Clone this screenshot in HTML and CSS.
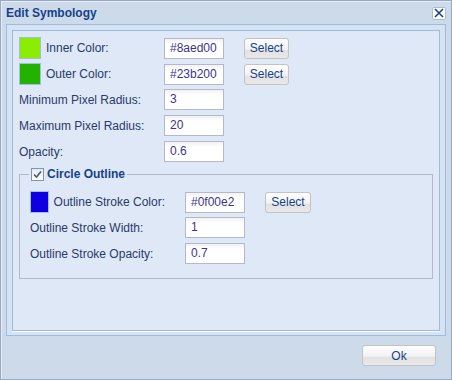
FILE: index.html
```html
<!DOCTYPE html>
<html lang="en">
  <head>
    <meta charset="UTF-8" />
    <title>Edit Symbology</title>
    <link rel="stylesheet" href="styles.css">
  </head>
  <body>
    <div class="win">
      <div class="win-head">
        <span class="win-title">Edit Symbology</span>
        <span class="win-close">
          <svg width="10" height="10" viewBox="0 0 10 10"><path d="M1 1L9 9M9 1L1 9" stroke="#15428b" stroke-width="1.6" /></svg>
        </span>
      </div>
      <div class="frame">
        <div class="panel">
          <div class="row">
            <div class="lbl"><span class="swatch" style="background:#8aed00"></span>Inner Color:</div>
            <div class="field">#8aed00</div>
            <button class="btn">Select</button>
          </div>
          <div class="row">
            <div class="lbl"><span class="swatch" style="background:#23b200"></span>Outer Color:</div>
            <div class="field">#23b200</div>
            <button class="btn">Select</button>
          </div>
          <div class="row">
            <div class="lbl">Minimum Pixel Radius:</div>
            <div class="field">3</div>
          </div>
          <div class="row">
            <div class="lbl">Maximum Pixel Radius:</div>
            <div class="field">20</div>
          </div>
          <div class="row">
            <div class="lbl">Opacity:</div>
            <div class="field">0.6</div>
          </div>
          <fieldset class="group">
            <legend>
              <span class="check">
                <svg width="9" height="9" viewBox="0 0 9 9"><path d="M1 4.5L3.5 7L8 1.5" fill="none" stroke="#4a5a70" stroke-width="1.6" /></svg>
              </span>
              Circle Outline
            </legend>
            <div class="row wide">
              <div class="lbl"><span class="swatch" style="background:#0f00e2"></span>Outline Stroke Color:</div>
              <div class="field">#0f00e2</div>
              <button class="btn">Select</button>
            </div>
            <div class="row wide">
              <div class="lbl">Outline Stroke Width:</div>
              <div class="field">1</div>
            </div>
            <div class="row wide">
              <div class="lbl">Outline Stroke Opacity:</div>
              <div class="field">0.7</div>
            </div>
          </fieldset>
        </div>
      </div>
      <div class="win-foot">
        <button class="btn ok">Ok</button>
      </div>
    </div>
  </body>
</html>
```

FILE: styles.css
```css
body {
  margin: 0;
  font-family: "Liberation Sans", Arial, sans-serif;
  font-size: 12px;
}
.win {
  box-sizing: border-box;
  width: 452px;
  height: 380px;
  border: 1px solid #99a9c4;
  background: #cddae9;
  box-shadow: inset 1px 1px 0 #e4ecf6;
}
.win-head {
  height: 23px;
  display: flex;
  align-items: center;
  justify-content: space-between;
  padding: 0 5px 0 5px;
}
.win-title {
  font-weight: bold;
  color: #15428b;
  font-size: 12px;
  margin-top: 1px;
}
.win-close {
  box-sizing: border-box;
  width: 14px;
  height: 13px;
  margin-top: 1px;
  border: 1px solid #a9bcd6;
  border-radius: 2px;
  background: #fff;
  display: flex;
  align-items: center;
  justify-content: center;
}
.frame {
  margin: 0 5px;
  border: 1px solid #99bbe8;
  background: #d8e3f2;
  padding: 5px 5px 4px 5px;
}
.panel {
  box-sizing: border-box;
  height: 301px;
  border: 1px solid #99bbe8;
  background: #dfe8f6;
  box-shadow: 0 1px 0 #fff;
  padding: 6px 0 0 6px;
}
.row {
  display: grid;
  grid-template-columns: 125px 60px 45px;
  column-gap: 20px;
  align-items: center;
  height: 21px;
  margin-bottom: 5px;
  color: #2a3a6a;
}
.row.wide {
  grid-template-columns: 135px 60px 46px;
}
.lbl {
  display: flex;
  align-items: center;
  white-space: nowrap;
}
.swatch {
  box-sizing: border-box;
  width: 22px;
  height: 22px;
  border: 1px solid #9fbde6;
  margin-right: 5px;
}
.field {
  box-sizing: border-box;
  height: 21px;
  line-height: 19px;
  border: 1px solid #b5b8c8;
  background: linear-gradient(#f1f1f1, #fff 5px);
  padding-left: 5px;
  color: #3b348e;
  font-size: 12px;
}
.btn {
  box-sizing: border-box;
  height: 21px;
  border: 1px solid #c3c3c3;
  border-radius: 3px;
  background: linear-gradient(#fdfdfd, #f2f2f2 55%, #e1e1e1 56%, #e9e9e9);
  color: #15428b;
  font-family: "Liberation Sans", Arial, sans-serif;
  font-size: 12px;
  padding: 0;
}
.group {
  margin: 1px 6px 0 0;
  border: 1px solid #b5b8c8;
  padding: 10px 10px 9px 10px;
}
.group legend {
  padding: 0 2px 0 1px;
  margin-left: -1px;
  color: #15428b;
  font-weight: bold;
  display: flex;
  align-items: center;
}
.check {
  box-sizing: border-box;
  width: 13px;
  height: 13px;
  border: 1px solid #8394ad;
  background: linear-gradient(#e4e8ee, #fff);
  display: inline-flex;
  align-items: center;
  justify-content: center;
  margin: 0 3px 0 1px;
}
.win-foot {
  display: flex;
  justify-content: flex-end;
  padding: 9px 15px 0 0;
}
.btn.ok {
  width: 74px;
}
```
